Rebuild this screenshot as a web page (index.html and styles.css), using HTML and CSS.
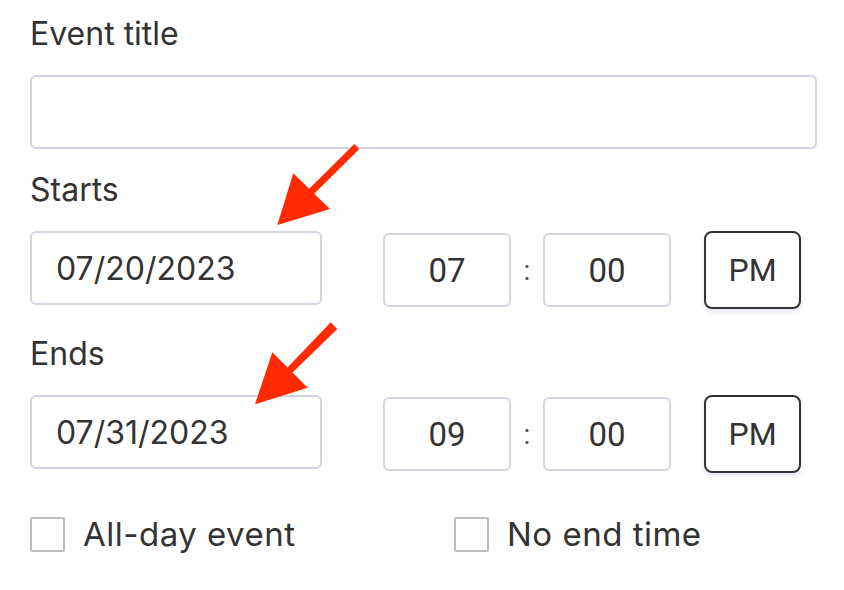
FILE: index.html
```html
<!DOCTYPE html>
<html lang="en">
<head>
<meta charset="utf-8">
<title>Event form</title>
<link rel="stylesheet" href="styles.css">
</head>
<body>
<form class="form">
  <label class="label" for="title">Event title</label>
  <input class="field field-title" id="title" type="text" value="">

  <label class="label label-starts" for="start-date">Starts</label>
  <div class="row">
    <input class="field field-date" id="start-date" type="text" value="07/20/2023">
    <div class="time">
      <input class="field field-time" type="text" value="07">
      <span class="colon">:</span>
      <input class="field field-time" type="text" value="00">
    </div>
    <button class="ampm" type="button">PM</button>
  </div>

  <label class="label label-ends" for="end-date">Ends</label>
  <div class="row">
    <input class="field field-date" id="end-date" type="text" value="07/31/2023">
    <div class="time">
      <input class="field field-time" type="text" value="09">
      <span class="colon">:</span>
      <input class="field field-time" type="text" value="00">
    </div>
    <button class="ampm" type="button">PM</button>
  </div>

  <div class="checks">
    <label class="check check-first"><span class="box"></span><span class="check-text">All-day event</span></label>
    <label class="check"><span class="box"></span><span class="check-text">No end time</span></label>
  </div>
</form>

<svg class="arrows" width="844" height="590" viewBox="0 0 844 590" aria-hidden="true">
  <polygon fill="#ff2a00" points="277.3,225 293.3,173.3 309.2,188.7 354.3,144 359.3,149 314.2,193.7 330,209"/>
  <polygon fill="#ff2a00" points="255,404.3 272.3,352.3 287.5,367.5 330.7,322.3 337.3,329 292.5,372.5 307.7,387.7"/>
</svg>
</body>
</html>
```

FILE: styles.css
```css
html, body {
  margin: 0;
  padding: 0;
  background: #ffffff;
}

body {
  width: 844px;
  height: 590px;
  position: relative;
  overflow: hidden;
  font-family: Inter, "Liberation Sans", sans-serif;
  color: #333333;
}

.form {
  display: flex;
  flex-direction: column;
  align-items: flex-start;
  padding: 18px 27px 0 30px;
}

.label {
  display: block;
  font-size: 32px;
  line-height: 32px;
  height: 32px;
  margin-bottom: 25px;
  color: #333333;
}

.label-starts {
  margin-top: 25px;
}

.label-ends {
  margin-top: 29px;
}

.field {
  box-sizing: border-box;
  border: 2px solid #d3d6e0;
  border-radius: 6px;
  background: #ffffff;
  font-family: Inter, "Liberation Sans", sans-serif;
  font-size: 32px;
  color: #333333;
  outline: none;
  margin: 0;
}

.field-title {
  width: 787px;
  height: 74px;
}

.row {
  display: flex;
  align-items: flex-start;
  height: 78px;
}

.field-date {
  width: 292px;
  height: 74px;
  padding: 0 0 0 24px;
}

.time {
  display: flex;
  align-items: center;
  margin-left: 61px;
  margin-top: 2px;
}

.field-time {
  width: 128px;
  height: 74px;
  padding: 0;
  text-align: center;
  font-family: Roboto, "Liberation Sans", sans-serif;
  font-size: 33px;
}

.colon {
  width: 32px;
  text-align: center;
  font-family: Roboto, "Liberation Sans", sans-serif;
  font-size: 28px;
  color: #444444;
}

.ampm {
  box-sizing: border-box;
  width: 97px;
  height: 78px;
  margin-left: 33px;
  border: 2px solid #333333;
  border-radius: 8px;
  background: #ffffff;
  box-shadow: 0 3px 5px rgba(90, 90, 200, 0.15);
  font-family: Roboto, "Liberation Sans", sans-serif;
  font-size: 32px;
  color: #333333;
  padding: 0;
}

.checks {
  display: flex;
  margin-top: 44px;
}

.check {
  display: flex;
  align-items: center;
}

.check-first {
  width: 424px;
}

.box {
  box-sizing: border-box;
  width: 35px;
  height: 35px;
  border: 2px solid #bcbcbc;
  border-radius: 2px;
  background: #ffffff;
}

.check-text {
  margin-left: 18px;
  font-size: 33px;
  line-height: 35px;
  letter-spacing: 0.5px;
  color: #333333;
}

.arrows {
  position: absolute;
  left: 0;
  top: 0;
  pointer-events: none;
}
```
